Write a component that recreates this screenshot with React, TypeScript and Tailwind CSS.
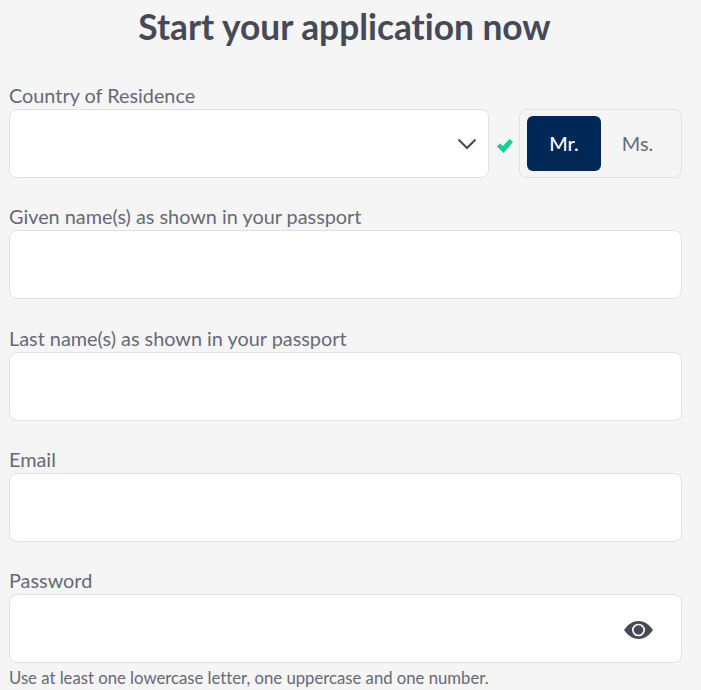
export default function App() {
  return (
    <div className="h-[690px] w-[701px] overflow-hidden bg-[#f5f5f5] pl-[9px] pr-[19px] font-['Lato',sans-serif] [font-variant-ligatures:none]">
      {/* Header */}
      <h1 className="h-[85px] pt-[5px] pr-[2px] text-center text-[35.3px] leading-[44px] font-bold text-[#454a56]">
        Start your application now
      </h1>

      {/* Country + title */}
      <label className="block h-[24px] text-[19.85px] leading-[20px] text-[#666a75]">Country of Residence</label>
      <div className="flex items-center">
        <div className="flex h-[69px] w-[480px] items-center justify-end rounded-lg border border-[#e1e1e1] bg-white pr-[12px]">
          <svg className="mr-[-1px]" width="20" height="12" viewBox="0 0 20 12" fill="none" stroke="#454a56" strokeWidth="2">
            <path d="M1.5 1.5 L10 10 L18.5 1.5" />
          </svg>
        </div>
        <svg className="ml-[8px] mt-[5px]" width="16" height="14" viewBox="0 0 16 14" fill="#0fd091">
          <path d="M0 7.5 L3 4.5 L6 7 L12.5 0 L16 3 L6.5 14 Z" />
        </svg>
        <div className="ml-[6px] flex h-[69px] w-[163px] items-center rounded-lg border border-[#e1e1e1] py-[6px] pl-[7px]">
          <div className="flex h-[55px] w-[74px] items-center justify-center rounded-md bg-[#002856] text-[19.85px] font-medium text-white">Mr.</div>
          <div className="flex h-[55px] w-[74px] items-center justify-center pr-[1px] text-[19.85px] text-[#666a75]">Ms.</div>
        </div>
      </div>

      {/* Given name */}
      <label className="mt-[27px] block h-[25px] text-[19.85px] leading-[22px] text-[#666a75]">Given name(s) as shown in your passport</label>
      <div className="h-[69px] rounded-lg border border-[#e1e1e1] bg-white" />

      {/* Last name */}
      <label className="mt-[28px] block h-[25px] text-[19.85px] leading-[22px] text-[#666a75]">Last name(s) as shown in your passport</label>
      <div className="h-[69px] rounded-lg border border-[#e1e1e1] bg-white" />

      {/* Email */}
      <label className="mt-[27px] block h-[25px] text-[19.85px] leading-[22px] text-[#666a75]">Email</label>
      <div className="h-[69px] rounded-lg border border-[#e1e1e1] bg-white" />

      {/* Password */}
      <label className="mt-[27px] block h-[25px] text-[19.85px] leading-[22px] text-[#666a75]">Password</label>
      <div className="flex h-[69px] items-center justify-end rounded-lg border border-[#e1e1e1] bg-white pr-[28px]">
        <svg className="mt-[2px]" width="29" height="18" viewBox="0 0 28 18" preserveAspectRatio="none">
          <path d="M0 9 C4 3 9 0 14 0 C19 0 24 3 28 9 C24 15 19 18 14 18 C9 18 4 15 0 9 Z" fill="#454a56" />
          <circle cx="14" cy="9" r="5.5" fill="none" stroke="#fff" strokeWidth="1.6" />
        </svg>
      </div>
      <p className="mt-[4px] text-[16.72px] leading-[22px] text-[#666a75]">Use at least one lowercase letter, one uppercase and one number.</p>
    </div>
  );
}
